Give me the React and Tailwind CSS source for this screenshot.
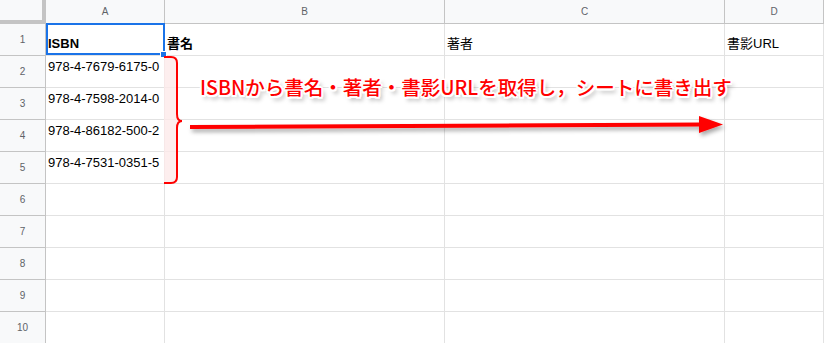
import React from 'react';

const cols = [
    { key: 'A', width: 'w-[119px]' },
    { key: 'B', width: 'w-[280px]' },
    { key: 'C', width: 'w-[280px]' },
    { key: 'D', width: 'w-[99px]' },
];

const rows = [
    { n: 1, cells: [{ t: 'ISBN', bold: true }, { t: '書名', bold: true }, { t: '著者' }, { t: '書影URL' }] },
    { n: 2, cells: [{ t: '978-4-7679-6175-0' }] },
    { n: 3, cells: [{ t: '978-4-7598-2014-0' }] },
    { n: 4, cells: [{ t: '978-4-86182-500-2' }] },
    { n: 5, cells: [{ t: '978-4-7531-0351-5' }] },
    { n: 6, cells: [] },
    { n: 7, cells: [] },
    { n: 8, cells: [] },
    { n: 9, cells: [] },
    { n: 10, cells: [] },
];

const font = "font-['Liberation_Sans','Noto_Sans_CJK_JP',sans-serif]";

const App = () => {
    return (
        <div className={`relative w-[824px] h-[343px] overflow-hidden bg-white ${font}`}>
            {/* column headers */}
            <div className="flex h-[24px]">
                <div className="w-[46px] shrink-0 bg-[#f8f9fa] border-r-4 border-b-4 border-[#c4c4c4]" />
                {cols.map((c) => (
                    <div
                        key={c.key}
                        className={`${c.width} shrink-0 bg-[#f8f9fa] border-r border-b border-[#c4c4c4] flex items-center justify-center text-[10px] text-[#5f6368]`}
                    >
                        {c.key}
                    </div>
                ))}
            </div>

            {rows.map((r) => (
                <div key={r.n} className="flex h-[32px]">
                    <div className="w-[46px] shrink-0 bg-[#f8f9fa] border-r border-b border-[#c4c4c4] flex items-center justify-center text-[10px] text-[#5f6368]">
                        {r.n}
                    </div>
                    {cols.map((c, i) => {
                        const cell = r.cells[i];
                        return (
                            <div
                                key={c.key}
                                className={`${c.width} shrink-0 border-r border-b border-[#e2e2e2] px-[2px] flex text-[13px] leading-[15px] text-black whitespace-nowrap overflow-hidden ${r.n === 1 ? 'items-end pb-[4px]' : 'items-start pt-[3px]'}`}
                            >
                                {cell && <span className={cell.bold ? 'font-bold' : ''}>{cell.t}</span>}
                            </div>
                        );
                    })}
                </div>
            ))}

            {/* selection */}
            <div className="absolute left-[46px] top-[23px] w-[119px] h-[32px] border-2 border-[#1a73e8]" />
            <div className="absolute left-[160px] top-[51px] w-[7px] h-[7px] bg-[#1a73e8] border border-white" />

            {/* annotation drawing */}
            <svg className="absolute left-0 top-0 pointer-events-none" width="824" height="343">
                <defs>
                    <filter id="sh" x="-10%" y="-50%" width="120%" height="300%">
                        <feDropShadow dx="2" dy="3" stdDeviation="2" floodColor="#000" floodOpacity="0.35" />
                    </filter>
                </defs>
                <path
                    d="M164,57 H171 Q177,57 177,63 V114 Q177,121 182,121 Q177,121 177,128 V177 Q177,183 171,183 H164 Z"
                    fill="#fdeaea"
                    fillOpacity="0.8"
                    stroke="none"
                />
                <path
                    d="M164,57 H171 Q177,57 177,63 V114 Q177,121 182,121 Q177,121 177,128 V177 Q177,183 171,183 H164"
                    fill="none"
                    stroke="#ff0000"
                    strokeWidth="2"
                />
                <g filter="url(#sh)">
                    <line x1="190" y1="127" x2="702" y2="124.5" stroke="#ff0000" strokeWidth="4" />
                    <polygon points="699,116 723,124.5 699,133" fill="#ff0000" />
                </g>
            </svg>

            <div className="absolute left-[200px] top-[75px] whitespace-nowrap text-[19.5px] leading-[24px] font-medium text-[#ff0000] font-['Noto_Sans_CJK_JP',sans-serif] [text-shadow:2px_0_0_#fff,-2px_0_0_#fff,0_2px_0_#fff,0_-2px_0_#fff,1.5px_1.5px_0_#fff,-1.5px_-1.5px_0_#fff,1.5px_-1.5px_0_#fff,-1.5px_1.5px_0_#fff,3px_4px_4px_rgba(0,0,0,0.35)]">
                ISBNから書名・著者・書影URLを取得し，シートに書き出す
            </div>
        </div>
    );
};

export default App;
